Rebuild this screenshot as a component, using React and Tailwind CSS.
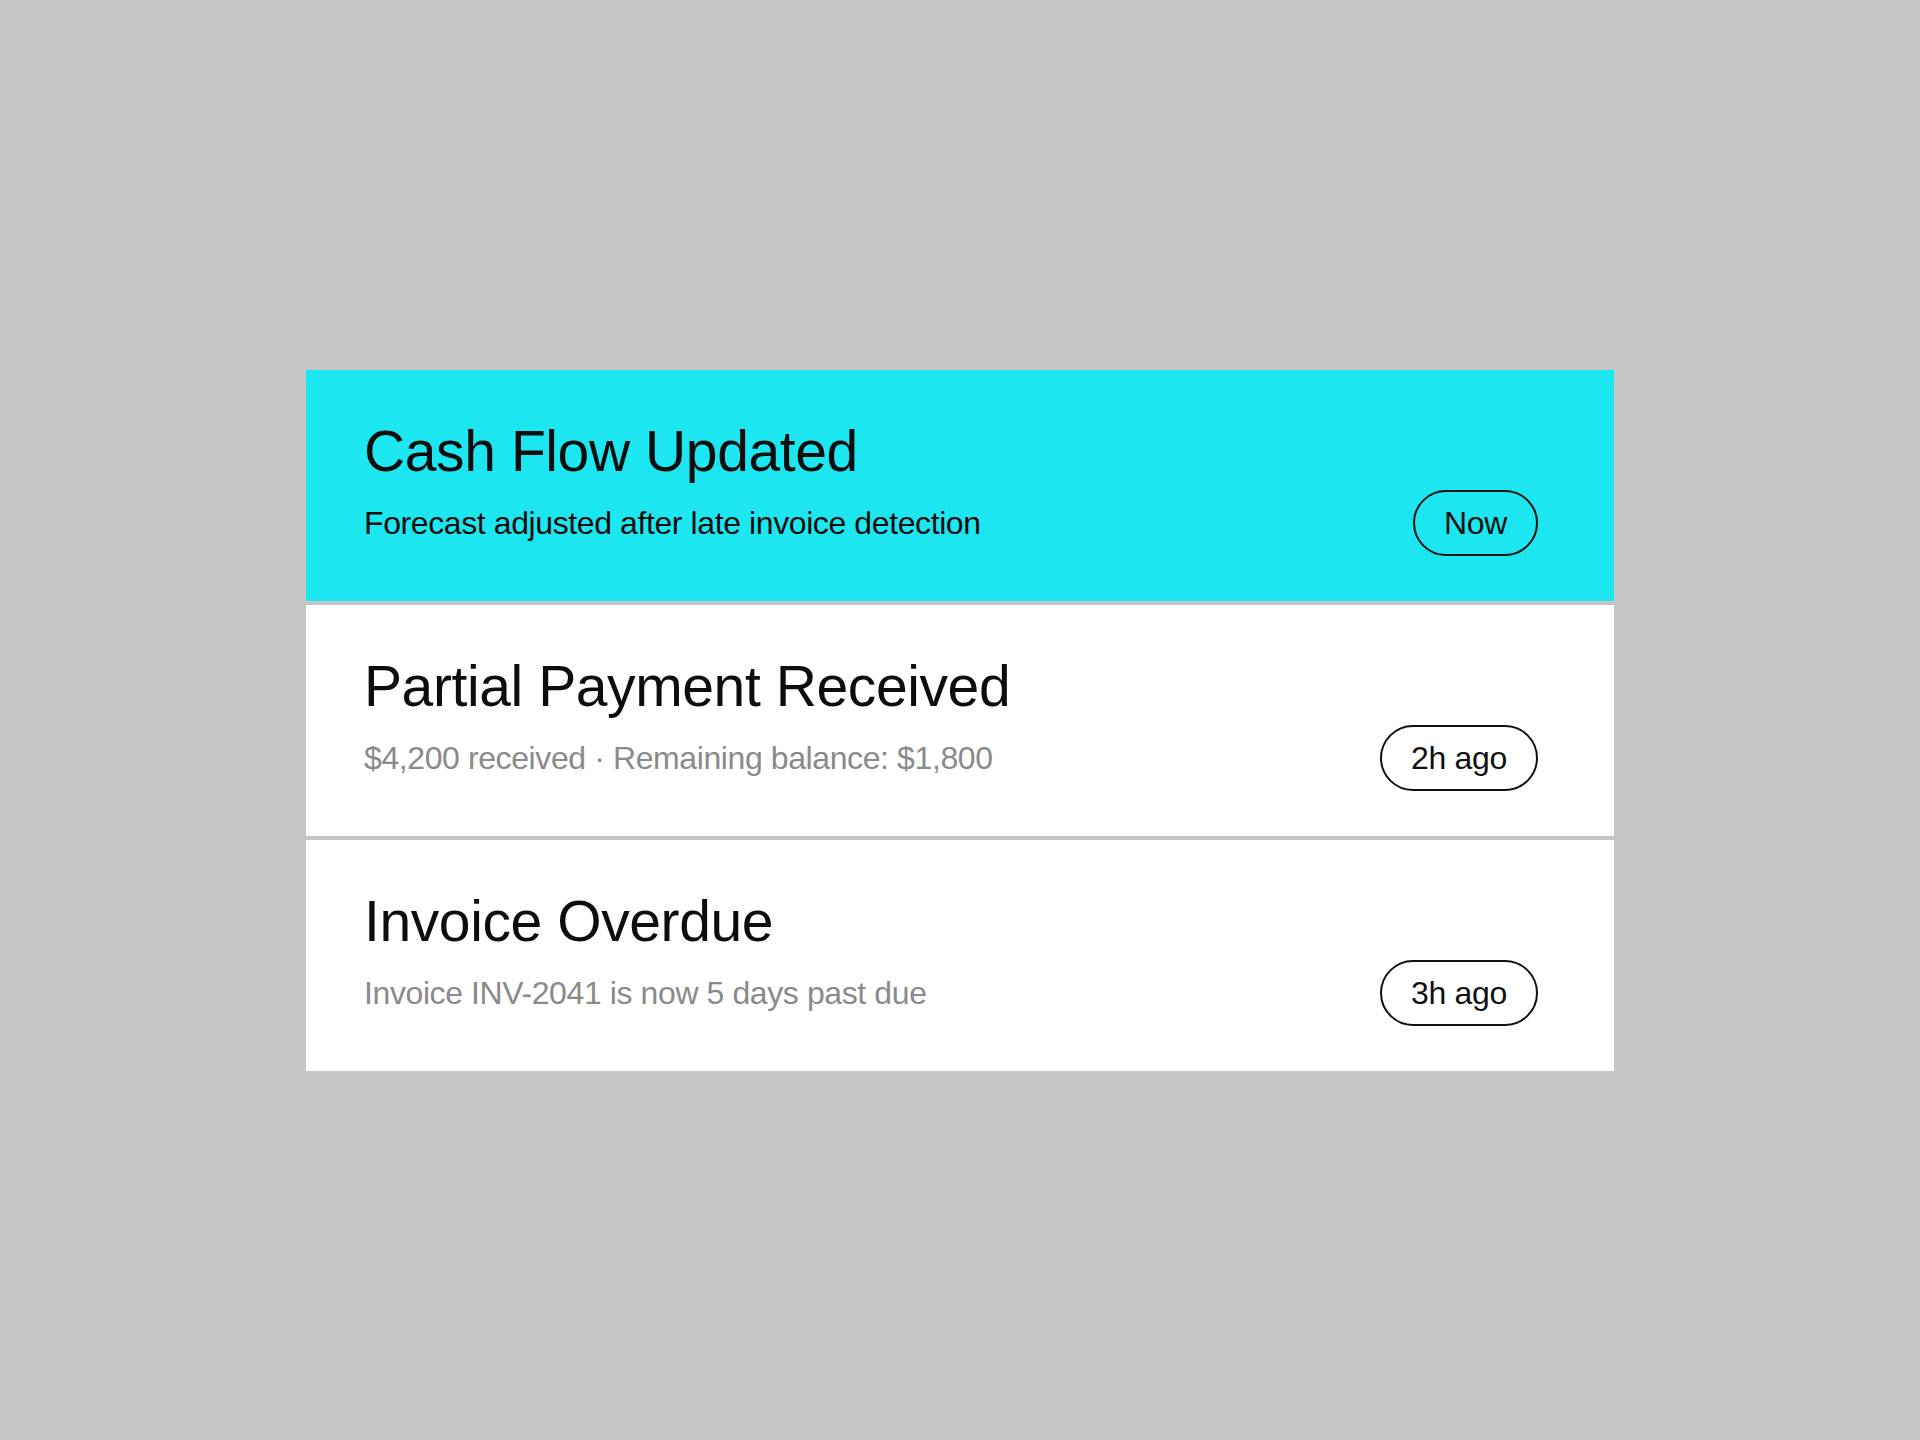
const alerts = [
  {
    id: 1,
    title: "Cash Flow Updated",
    detail: "Forecast adjusted after late invoice detection",
    time: "Now",
    active: true,
  },
  {
    id: 2,
    title: "Partial Payment Received",
    detail: "$4,200 received · Remaining balance: $1,800",
    time: "2h ago",
  },
  {
    id: 3,
    title: "Invoice Overdue",
    detail: "Invoice INV-2041 is now 5 days past due",
    time: "3h ago",
  },
];

const App = () => {
  return (
    <div className="min-h-screen flex items-center justify-center bg-[#c5c5c5] font-['Liberation_Sans',Arial,sans-serif]">
      <div className="w-[1308px] flex flex-col gap-1">
        {alerts.map((alert) => (
          <div
            key={alert.id}
            className={`h-[231px] pl-[58px] pr-[76px] pt-[53px] ${
              alert.active ? "bg-[#1ce6f0]" : "bg-white"
            }`}
          >
            <h3 className="text-[57px] leading-none text-[#0d0d0d] tracking-[-0.4px]">
              {alert.title}
            </h3>
            <div className="mt-[10px] flex items-center justify-between">
              <p
                className={`text-[32px] leading-none tracking-[-0.4px] ${
                  alert.active ? "text-[#0d0d0d]" : "text-[#8a8a8a]"
                }`}
              >
                {alert.detail}
              </p>
              {/* time pill */}
              <span className="h-[66px] px-[29px] flex items-center rounded-full border-2 border-[#111] text-[32px] leading-none text-[#111] tracking-[-0.3px]">
                {alert.time}
              </span>
            </div>
          </div>
        ))}
      </div>
    </div>
  );
};

export default App;
